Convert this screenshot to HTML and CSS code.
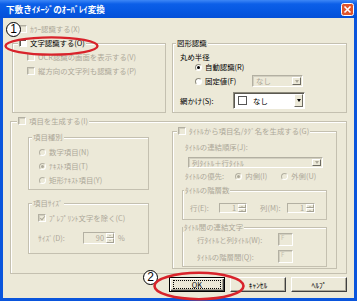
FILE: index.html
```html
<!DOCTYPE html>
<html lang="ja">
<head>
	<meta charset="UTF-8">
	<title>下敷きイメージのオーバレイ変換</title>
	<link rel="stylesheet" href="styles.css">
</head>
<body>
	<div id="window">
		<div class="titlebar">
			<span class="title">下敷きｲﾒｰｼﾞのｵｰﾊﾞﾚｲ変換</span>
			<svg class="close" width="13" height="13" viewBox="0 0 13 13">
				<rect x="0.5" y="0.5" width="12" height="12" rx="2" fill="#e0552c" stroke="#fff"/>
				<path d="M3.5 3.5 L9.5 9.5 M9.5 3.5 L3.5 9.5" stroke="#fff" stroke-width="1.6"/>
			</svg>
		</div>
		<div class="frame">
			<div class="top">
				<div class="ocr">
					<div class="row off color"><span class="chk dis"></span>ｶﾗｰ認識する(X)</div>
					<fieldset class="grp grp-ocr">
						<legend><span class="lg"><span class="chk"></span>文字認識する(O)</span></legend>
						<div class="row off sub"><span class="chk dis"></span>OCR認識の画面を表示する(V)</div>
						<div class="row off sub"><span class="chk dis"></span>縦方向の文字列も認識する(P)</div>
					</fieldset>
				</div>
				<fieldset class="grp grp-shape">
					<legend>図形認識</legend>
					<div class="shape-body">
						<div class="row first">丸め半径</div>
						<div class="row radio-row"><span class="rad sel"></span>自動認識(R)</div>
						<div class="row radio-row fixed">
							<span class="fixed-lbl"><span class="rad"></span>固定値(F)</span>
							<span class="combo dis small"><span class="ctext">なし</span><span class="drop"></span></span>
						</div>
						<div class="row hatch">
							<span class="hatch-lbl">網かけ(S):</span>
							<span class="combo big"><span class="swatch"></span><span class="ctext">なし</span><span class="drop"></span></span>
						</div>
					</div>
				</fieldset>
			</div>

			<fieldset class="grp grp-outer">
				<legend><span class="lg off"><span class="chk dis"></span>項目を生成する(I)</span></legend>
				<div class="outer-body">
					<div class="item-col">
						<fieldset class="grp grp-kind">
							<legend class="off">項目種別</legend>
							<div class="row off"><span class="rad dis"></span>数字項目(N)</div>
							<div class="row off"><span class="rad dis sel"></span>ﾃｷｽﾄ項目(T)</div>
							<div class="row off"><span class="rad dis"></span>矩形ﾃｷｽﾄ項目(Y)</div>
						</fieldset>
						<fieldset class="grp grp-size">
							<legend class="off">項目ｻｲｽﾞ</legend>
							<div class="row off pre"><span class="chk dis tick"></span>ﾌﾟﾚﾌﾟﾘﾝﾄ文字を除く(C)</div>
							<div class="row off size-row">
								<span class="size-lbl">ｻｲｽﾞ(D):</span>
								<span class="spin wide"><span class="val">90</span><span class="arrows"><span class="up"></span><span class="dn"></span></span></span>
								<span>%</span>
							</div>
						</fieldset>
					</div>
					<fieldset class="grp grp-title">
						<legend><span class="lg off"><span class="chk dis"></span>ﾀｲﾄﾙから項目名/ﾀｸﾞ名を生成する(G)</span></legend>
						<div class="title-body">
							<div class="row off txt first">ﾀｲﾄﾙの連結順序(J):</div>
							<span class="combo dis order"><span class="ctext">列ﾀｲﾄﾙ＋行ﾀｲﾄﾙ</span><span class="drop"></span></span>
							<div class="row off txt prio">
								<span class="prio-lbl">ﾀｲﾄﾙの優先:</span>
								<span class="prio-opt"><span class="rad dis sel"></span>内側(I)</span>
								<span class="prio-opt"><span class="rad dis"></span>外側(U)</span>
							</div>
							<fieldset class="grp grp-level">
								<legend class="off">ﾀｲﾄﾙの階層数</legend>
								<div class="row off lvl-row">
									<span class="lvl-lbl">行(E):</span>
									<span class="spin"><span class="val">1</span><span class="arrows"><span class="up"></span><span class="dn"></span></span></span>
									<span class="lvl-lbl col">列(M):</span>
									<span class="spin"><span class="val">1</span><span class="arrows"><span class="up"></span><span class="dn"></span></span></span>
								</div>
							</fieldset>
							<fieldset class="grp grp-join">
								<legend class="off">ﾀｲﾄﾙ間の連結文字</legend>
								<div class="row off join-row first">
									<span class="join-lbl">行ﾀｲﾄﾙと列ﾀｲﾄﾙ(W):</span>
									<span class="tbox">F</span>
								</div>
								<div class="row off join-row">
									<span class="join-lbl">ﾀｲﾄﾙの階層間(Q):</span>
									<span class="tbox">F</span>
								</div>
							</fieldset>
						</div>
					</fieldset>
				</div>
			</fieldset>

			<div class="buttons">
				<div class="btn def"><span>OK</span></div>
				<div class="btn">ｷｬﾝｾﾙ</div>
				<div class="btn">ﾍﾙﾌﾟ</div>
			</div>
		</div>

		<!-- annotations drawn over the dialog -->
		<div class="num num1">1</div>
		<svg class="ring ring1" width="95" height="20" viewBox="0 0 95 20">
			<ellipse cx="47.5" cy="10" rx="46" ry="8.6" fill="none" stroke="#d8232b" stroke-width="2.4"/>
		</svg>
		<div class="num num2">2</div>
		<svg class="ring ring2" width="92" height="30" viewBox="0 0 92 30">
			<ellipse cx="46" cy="15" rx="44.5" ry="13.2" fill="none" stroke="#d8232b" stroke-width="2.6"/>
		</svg>
	</div>
</body>
</html>
```

FILE: styles.css
```css
*{
	margin: 0;
	padding: 0;
	box-sizing: border-box;
}
html,body{
	width: 100%;
	height: 100%;
}
body{
	font-family: "Noto Sans CJK JP", "Noto Sans", sans-serif;
	font-size: 7.4px;
	line-height: 10px;
	color: #000;
	background-color: #fff;
}
#window{
	position: relative;
	width: 357px;
	height: 301px;
	display: flex;
	flex-direction: column;
	overflow: hidden;
}
.titlebar{
	height: 18px;
	display: flex;
	align-items: center;
	justify-content: space-between;
	padding: 0 3px 0 6px;
	background: linear-gradient(#3d87f6, #0c5fe8 4px, #0658e2 60%, #0450d8);
}
.title{
	color: #fff;
	font-size: 8.6px;
	font-weight: bold;
}
.close{
	display: block;
}
.frame{
	flex: 1;
	display: flex;
	flex-direction: column;
	background-color: #ece9d8;
	border: 3px solid #0a55dc;
	border-top: none;
}

/* generic rows and group boxes */
.row{
	display: flex;
	align-items: center;
	height: 10px;
	gap: 3px;
	white-space: nowrap;
}
.off{
	color: #aca899;
}
.grp{
	border: 1px solid #c4c0b0;
	box-shadow: inset 1px 1px 0 #fff;
	min-width: 0;
}
.grp legend{
	line-height: 10px;
	padding: 0 1px;
	background-color: #ece9d8;
	white-space: nowrap;
}
.lg{
	display: flex;
	align-items: center;
	gap: 3px;
	height: 10px;
}

/* checkbox / radio */
.chk{
	display: inline-block;
	flex: none;
	width: 8px;
	height: 8px;
	background-color: #fff;
	border: 1px solid;
	border-color: #8d8a7c #fff #fff #8d8a7c;
	box-shadow: inset 1px 1px 0 #5a5850;
	position: relative;
}
.chk.dis{
	background-color: #ece9d8;
	border-color: #b3b0a2 #fff #fff #b3b0a2;
	box-shadow: inset 1px 1px 0 #d2cfc0;
}
.chk.tick:after{
	content: "";
	position: absolute;
	left: 1.5px;
	top: 0;
	width: 2px;
	height: 4px;
	border: solid #aca899;
	border-width: 0 1.4px 1.4px 0;
	transform: rotate(40deg);
}
.rad{
	display: inline-flex;
	flex: none;
	align-items: center;
	justify-content: center;
	width: 7px;
	height: 7px;
	border-radius: 50%;
	background-color: #fff;
	border: 1px solid;
	border-color: #8d8a7c #fff #fff #8d8a7c;
}
.rad.dis{
	background-color: #ece9d8;
	border-color: #b3b0a2 #fff #fff #b3b0a2;
}
.rad.sel:after{
	content: "";
	width: 3px;
	height: 3px;
	border-radius: 50%;
	background-color: #000;
}
.rad.dis.sel:after{
	background-color: #aca899;
}

/* combo, spin, text box */
.combo{
	display: flex;
	align-items: center;
	background-color: #fff;
	border: 1px solid;
	border-color: #8d8a7c #fff #fff #8d8a7c;
	box-shadow: inset 1px 1px 0 #5a5850;
}
.combo.dis{
	background-color: #ece9d8;
	color: #aca899;
	border-color: #b3b0a2 #fff #fff #b3b0a2;
	box-shadow: inset 1px 1px 0 #d2cfc0;
}
.ctext{
	flex: 1;
	padding-left: 3px;
	white-space: nowrap;
}
.drop{
	align-self: stretch;
	width: 9px;
	margin: 1px 1px 1px 0;
	display: flex;
	align-items: center;
	justify-content: center;
	background-color: #ece9d8;
	border: 1px solid;
	border-color: #fff #6d6b62 #6d6b62 #fff;
}
.drop:after{
	content: "";
	border-left: 2.5px solid transparent;
	border-right: 2.5px solid transparent;
	border-top: 3px solid #000;
}
.combo.dis .drop:after{
	border-top-color: #aca899;
}
.spin{
	display: flex;
	width: 28px;
	height: 10px;
	background-color: #ece9d8;
	border: 1px solid;
	border-color: #b3b0a2 #fff #fff #b3b0a2;
}
.spin .val{
	flex: 1;
	text-align: right;
	padding-right: 2px;
	line-height: 8px;
}
.arrows{
	width: 8px;
	display: flex;
	flex-direction: column;
}
.arrows span{
	flex: 1;
	border: 1px solid;
	border-color: #fff #a5a293 #a5a293 #fff;
	display: flex;
	align-items: center;
	justify-content: center;
}
.arrows .up:after{
	content: "";
	border-left: 1.5px solid transparent;
	border-right: 1.5px solid transparent;
	border-bottom: 1.5px solid #aca899;
}
.arrows .dn:after{
	content: "";
	border-left: 1.5px solid transparent;
	border-right: 1.5px solid transparent;
	border-top: 1.5px solid #aca899;
}
.tbox{
	width: 15px;
	height: 13px;
	background-color: #ece9d8;
	border: 1px solid;
	border-color: #b3b0a2 #fff #fff #b3b0a2;
	box-shadow: inset 1px 1px 0 #d2cfc0;
	font-size: 6px;
	line-height: 7px;
	padding-left: 2px;
	color: #c4c0b0;
}

/* top section */
.top{
	display: flex;
	margin-top: 6px;
	padding-left: 9px;
}
.ocr{
	width: 154px;
}
.color{
	padding-left: 7px;
}
.grp-ocr{
	margin-top: 4px;
	padding-bottom: 36px;
}
.grp-ocr legend{
	margin-left: 5px;
}
.grp-ocr .sub{
	padding-left: 14px;
	margin-top: 4px;
}
.grp-shape{
	margin-left: 6px;
	margin-top: 14px;
	width: 175px;
}
.grp-shape legend{
	margin-left: 3px;
}
.shape-body{
	padding-left: 7px;
}
.shape-body .first{
	margin-top: 4px;
}
.radio-row{
	padding-left: 15px;
}
.fixed{
	height: 12px;
	margin-top: 3px;
	gap: 0;
}
.fixed-lbl{
	width: 57px;
	display: flex;
	align-items: center;
	gap: 3px;
}
.combo.small{
	width: 51px;
	height: 12px;
}
.hatch{
	height: 17px;
	margin-top: 5px;
	gap: 0;
}
.hatch-lbl{
	width: 53px;
}
.combo.big{
	width: 72px;
	height: 17px;
	padding-left: 4px;
}
.swatch{
	width: 9px;
	height: 9px;
	border: 1px solid #555;
	background-color: #fff;
	margin-right: 3px;
}

/* generate items section */
.grp-outer{
	margin: 3px 7px 0 7px;
	padding-bottom: 4px;
}
.grp-outer > legend{
	margin-left: 6px;
}
.outer-body{
	display: flex;
	align-items: flex-start;
}
.item-col{
	margin-left: 17px;
	width: 121px;
}
.grp-kind{
	margin-top: 6px;
	padding: 0 0 4px 10px;
}
.grp-kind legend{
	margin-left: -7px;
}
.grp-kind .row{
	margin-top: 4px;
}
.grp-kind legend + .row{
	margin-top: 5px;
}
.grp-size{
	margin-top: 8px;
	padding: 0 0 9px 9px;
}
.grp-size legend{
	margin-left: -6px;
}
.pre{
	margin-top: 5px;
}
.size-row{
	height: 12px;
	margin-top: 9px;
	gap: 0;
}
.size-lbl{
	width: 45px;
}
.spin.wide{
	width: 32px;
	height: 12px;
	margin-right: 3px;
}
.spin.wide .val{
	line-height: 10px;
}
.grp-title{
	margin-left: 23px;
	width: 165px;
	padding-bottom: 1px;
}
.grp-title > legend{
	margin-left: 4px;
}
.title-body{
	padding: 0 9px;
}
.txt{
	margin-left: 3px;
}
.title-body .first{
	margin-top: 6px;
}
.combo.order{
	width: 135px;
	height: 11px;
	margin: 5px 0 0 6px;
}
.prio{
	margin-top: 3px;
	gap: 0;
}
.prio-lbl{
	width: 56px;
}
.prio-opt{
	width: 51px;
	display: flex;
	align-items: center;
	gap: 3px;
}
.grp-level{
	margin-top: 4px;
	padding: 0 0 6px 7px;
}
.grp-level legend{
	margin-left: -6px;
}
.lvl-row{
	margin-top: 8px;
	gap: 0;
}
.lvl-lbl{
	width: 29px;
}
.lvl-lbl.col{
	width: 27px;
	margin-left: 13px;
}
.grp-join{
	margin-top: 2px;
	padding: 0 0 3px 14px;
}
.grp-join legend{
	margin-left: -14px;
}
.join-row{
	height: 13px;
	margin-top: 4px;
	gap: 0;
}
.join-row.first{
	margin-top: 1px;
}
.join-lbl{
	width: 81px;
}

/* dialog buttons */
.buttons{
	display: flex;
	justify-content: flex-end;
	gap: 5px;
	margin-top: 3px;
	padding-right: 7px;
}
.btn{
	width: 56px;
	height: 15px;
	display: flex;
	align-items: center;
	justify-content: center;
	background-color: #ece9d8;
	border: 1px solid;
	border-color: #fff #404040 #404040 #fff;
	box-shadow: inset -1px -1px 0 #aca899;
}
.btn.def{
	border-color: #000;
	box-shadow: inset 1px 1px 0 #fff, inset -1px -1px 0 #404040, inset -2px -2px 0 #aca899;
}
.btn.def span{
	width: 48px;
	height: 9px;
	display: flex;
	align-items: center;
	justify-content: center;
	border: 1px dotted #000;
}

/* red marks and numbers over the dialog */
.num{
	position: absolute;
	width: 15px;
	height: 15px;
	border-radius: 50%;
	border: 1px solid #000;
	background-color: #fff;
	font-family: "Liberation Sans", sans-serif;
	font-size: 12px;
	line-height: 13px;
	text-align: center;
}
.num1{
	left: 6px;
	top: 22px;
}
.num2{
	left: 143px;
	top: 270px;
}
.ring{
	position: absolute;
}
.ring1{
	left: 4px;
	top: 36px;
}
.ring2{
	left: 153px;
	top: 271px;
}
```
